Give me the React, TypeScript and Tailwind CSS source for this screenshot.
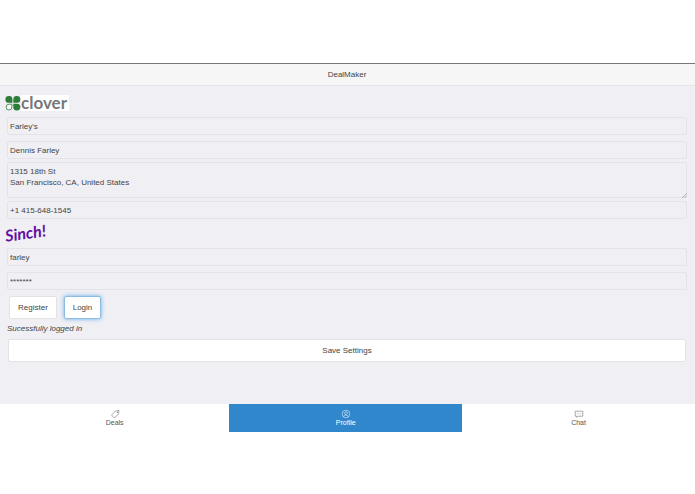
import { useState } from 'react';
import type { InputHTMLAttributes, ReactNode } from 'react';

const fieldStyle =
    'block w-full rounded-xs border border-[#e3e3e8] bg-transparent px-0.5 text-[8px] text-[#444] outline-none placeholder:text-[#444]';

function Field(props: InputHTMLAttributes<HTMLInputElement>) {
    return <input {...props} className={`${fieldStyle} h-[18px]`} />;
}

function CloverLogo() {
    return (
        <div className="flex h-4 w-16 items-center bg-white">
            <svg viewBox="0 0 16 16" className="size-4 shrink-0 bg-[#efeff4]" aria-hidden="true">
                <g fill="#2c7d38">
                    <path d="M3.8 1A3.4 3.4 0 0 0 3.8 7.8H7.4V4.4A3.4 3.4 0 0 0 3.8 1Z" />
                    <path d="M11.9 1A3.4 3.4 0 0 1 11.9 7.8H8.3V4.4A3.4 3.4 0 0 1 11.9 1Z" />
                    <path d="M11.9 15.5A3.4 3.4 0 0 0 11.9 8.7H8.3V12.1A3.4 3.4 0 0 0 11.9 15.5Z" />
                </g>
                <path
                    d="M4 9.2H6.9V12.1A2.9 2.9 0 1 1 4 9.2Z"
                    fill="#f8f8fa"
                    stroke="#2c7d38"
                    strokeWidth="0.8"
                />
            </svg>
            <span className="font-['Lato',sans-serif] text-[17px] leading-4 font-bold text-[#77777a]">
                clover
            </span>
        </div>
    );
}

function SinchLogo() {
    return (
        <div className="flex h-7 items-center">
            <span className="-rotate-8 font-['Lato',sans-serif] text-[16px] leading-5 font-bold text-[#6310a5] italic">
                Sinch!
            </span>
        </div>
    );
}

const tabs: { name: string; icon: ReactNode }[] = [
    {
        name: 'Deals',
        icon: (
            <>
                <path d="M1.5 6 5.5 2 9 1.5 8.5 5 4.5 9Z" />
                <circle cx="7.3" cy="3.2" r="0.4" />
            </>
        ),
    },
    {
        name: 'Profile',
        icon: (
            <>
                <circle cx="5" cy="5" r="3.8" />
                <circle cx="5" cy="4.1" r="1.4" />
                <path d="M2.6 7.8C3 6.4 4 6.3 5 6.3S7 6.4 7.4 7.8" />
            </>
        ),
    },
    {
        name: 'Chat',
        icon: (
            <>
                <path d="M1.2 2.2H8.8V7.2H4L2.8 8.4V7.2H1.2Z" />
                <path d="M3 4.7H7" strokeDasharray="0.7 0.9" />
            </>
        ),
    },
];

export default function App() {
    const [activeTab, setActiveTab] = useState('Profile');

    return (
        <div className="bg-white py-[63px] font-['Liberation_Sans',Arial,sans-serif] text-[8px] text-[#444]">
            <header className="flex h-[23px] items-center justify-center border-t border-b border-t-[#777] border-b-[#e5e5e9] bg-[#f6f6f6] pr-px">
                <h1>DealMaker</h1>
            </header>

            <main className="flex h-[318px] flex-col bg-[#efeff4] pt-[9px] pr-2 pl-[7px]">
                <div className="-ml-0.5">
                    <CloverLogo />
                </div>
                <form onSubmit={(e) => e.preventDefault()}>
                    <div className="mt-1.5">
                        <Field aria-label="Business name" defaultValue="Farley's" />
                    </div>
                    <div className="mt-1.5">
                        <Field aria-label="Contact name" defaultValue="Dennis Farley" />
                    </div>
                    <div className="relative mt-[3px]">
                        <textarea
                            aria-label="Address"
                            className={`${fieldStyle} h-9 resize-none overflow-hidden py-[3px] leading-[11px]`}
                            defaultValue={'1315 18th St\nSan Francisco, CA, United States'}
                        />
                        <svg
                            viewBox="0 0 5 5"
                            className="absolute right-0 bottom-0 size-[5px]"
                            stroke="#999"
                            strokeWidth="0.7"
                            aria-hidden="true"
                        >
                            <path d="M0 5 5 0M2.5 5 5 2.5" />
                        </svg>
                    </div>
                    <div className="mt-[3px]">
                        <Field type="tel" aria-label="Phone" defaultValue="+1 415-648-1545" />
                    </div>

                    <div className="-ml-0.5">
                        <SinchLogo />
                    </div>
                    <div className="mt-px">
                        <Field aria-label="Username" defaultValue="farley" />
                    </div>
                    <div className="mt-1.5">
                        <Field type="password" aria-label="Password" placeholder="*******" />
                    </div>

                    <div className="mt-1.5 ml-0.5 flex gap-[7px]">
                        <button
                            type="button"
                            className="h-[23px] w-12 rounded-xs border border-[#e3e3e6] bg-white"
                        >
                            Register
                        </button>
                        <button
                            type="button"
                            className="h-[23px] w-[37px] rounded-xs border border-[#8dbde3] bg-white shadow-[0_0_4px_#66afe9]"
                        >
                            Login
                        </button>
                    </div>
                    <p className="mt-1 leading-3 italic">Sucessfully logged in</p>
                    <div className="mt-1 px-px">
                        <button
                            type="submit"
                            className="h-[23px] w-full rounded-xs border border-[#e3e3e6] bg-white"
                        >
                            Save Settings
                        </button>
                    </div>
                </form>
            </main>

            <nav className="grid h-7 grid-cols-[33fr_33.5fr_33.5fr] bg-white">
                {tabs.map((tab) => (
                    <button
                        key={tab.name}
                        type="button"
                        onClick={() => setActiveTab(tab.name)}
                        className={`flex flex-col items-center justify-center text-[7px] leading-2 ${
                            activeTab === tab.name ? 'bg-[#3187cc] text-white' : 'text-[#555]'
                        }`}
                    >
                        <svg
                            viewBox="0 0 10 10"
                            className="size-2.5"
                            fill="none"
                            stroke="currentColor"
                            strokeWidth="0.5"
                            aria-hidden="true"
                        >
                            {tab.icon}
                        </svg>
                        {tab.name}
                    </button>
                ))}
            </nav>
        </div>
    );
}
